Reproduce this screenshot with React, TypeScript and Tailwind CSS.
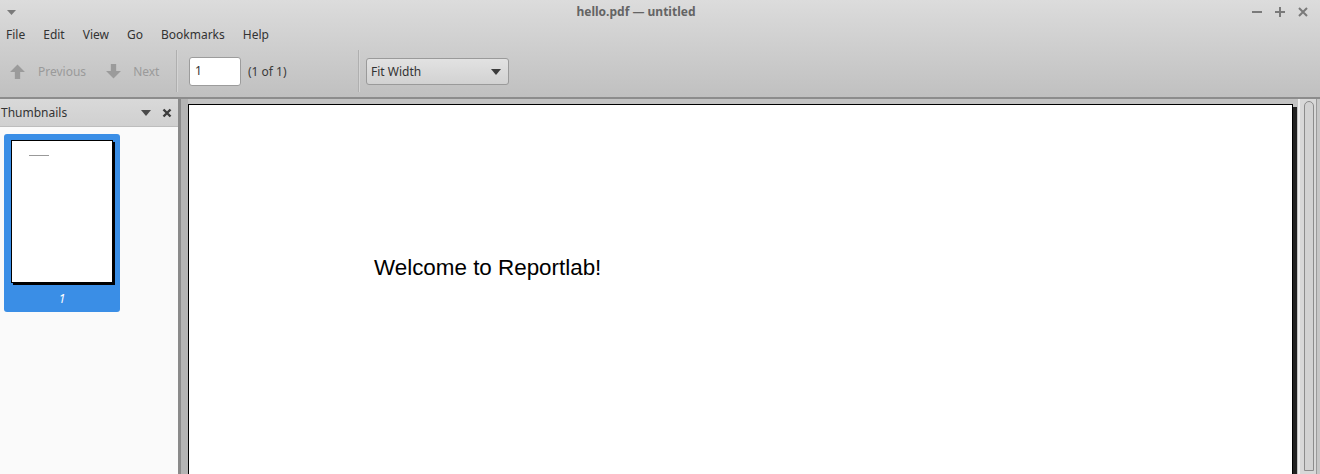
import React from "react";

function ArrowIcon({ down }: { down?: boolean }) {
  return (
    <svg width="17" height="17" viewBox="0 0 16 16" className={down ? "rotate-180" : ""}>
      <path d="M8 1.5 L15 8.5 L10.5 8.5 L10.5 15 L5.5 15 L5.5 8.5 L1 8.5 Z" fill="#9b9b9b" />
    </svg>
  );
}

function Caret({ color = "#4a4a4a" }: { color?: string }) {
  return (
    <svg width="10" height="6" viewBox="0 0 10 6">
      <path d="M0 0 L10 0 L5 6 Z" fill={color} />
    </svg>
  );
}

const menus = ["File", "Edit", "View", "Go", "Bookmarks", "Help"];

export default function App() {
  return (
    <div className="w-[1320px] h-[474px] overflow-hidden flex flex-col bg-[#c4c4c4] text-[12px] text-[#3a3a3a] font-['Noto_Sans',sans-serif]">
      {/* header: title, menu, toolbar */}
      <div className="h-[97px] flex flex-col bg-gradient-to-b from-[#dcdcdc] to-[#c0c0c0] shrink-0">
        <div className="h-[23px] flex items-center relative">
          <div className="pl-[7px] pt-[1px]">
            <svg width="9" height="5" viewBox="0 0 9 5">
              <path d="M0 0 L9 0 L4.5 5 Z" fill="#7a7a7a" />
            </svg>
          </div>
          <div className="flex-1 flex justify-center pl-[4px] font-bold text-[12px] text-[#646464]">
            hello.pdf — untitled
          </div>
          <div className="flex items-center gap-[13px] pr-[12px] text-[#777]">
            <svg width="10" height="10" viewBox="0 0 10 10">
              <path d="M0 5 H10" stroke="#7a7a7a" strokeWidth="2" />
            </svg>
            <svg width="10" height="10" viewBox="0 0 10 10">
              <path d="M0 5 H10 M5 0 V10" stroke="#7a7a7a" strokeWidth="2" />
            </svg>
            <svg width="10" height="10" viewBox="0 0 10 10">
              <path d="M1 1 L9 9 M9 1 L1 9" stroke="#7a7a7a" strokeWidth="2" />
            </svg>
          </div>
        </div>
        <div className="h-[22px] flex items-center pl-[6px] pt-[2px] gap-[18px] text-[#333]">
          {menus.map((m) => (
            <span key={m}>{m}</span>
          ))}
        </div>
        <div className="flex-1 flex items-center">
          <div className="flex items-center pl-[9px] w-[176px] h-full pt-[1px] text-[#9a9a9a]">
            <ArrowIcon />
            <span className="ml-[12px]">Previous</span>
            <span className="ml-[19px]"><ArrowIcon down /></span>
            <span className="ml-[11px]">Next</span>
          </div>
          <div className="w-[2px] h-[42px] border-l border-[#afafaf] border-r border-r-[#d4d4d4]" />
          <div className="flex items-center w-[180px] pl-[11px]">
            <div className="w-[52px] h-[29px] bg-white border border-[#9c9c9c] rounded-[3px] flex items-center pl-[5px] text-[#333]">
              1
            </div>
            <span className="ml-[7px] pt-[1px] text-[#3a3a3a]">(1 of 1)</span>
          </div>
          <div className="w-[2px] h-[42px] border-l border-[#afafaf] border-r border-r-[#d4d4d4]" />
          <div className="pl-[6px]">
            <div className="w-[143px] h-[27px] border border-[#9a9a9a] rounded-[3px] bg-gradient-to-b from-[#e2e2e2] to-[#d2d2d2] flex items-center justify-between pl-[4px] pr-[7px] pt-[1px] text-[12px] text-[#333]">
              <span>Fit Width</span>
              <Caret color="#3c3c3c" />
            </div>
          </div>
        </div>
      </div>
      <div className="h-[2px] bg-[#8c8c8c] shrink-0" />

      {/* body */}
      <div className="flex-1 flex min-h-0">
        {/* sidebar */}
        <div className="w-[178px] flex flex-col bg-[#fafafa] shrink-0">
          <div className="h-[28px] flex items-center bg-gradient-to-b from-[#d9d9d9] to-[#d0d0d0] border-b border-[#bdbdbd] text-[#333]">
            <span className="pl-[1px] flex-1">Thumbnails</span>
            <span className="mr-[11px] mt-[1px]"><Caret /></span>
            <svg width="10" height="10" viewBox="0 0 10 10" className="mr-[6px]">
              <path d="M1.5 1.5 L8.5 8.5 M8.5 1.5 L1.5 8.5" stroke="#3c3c3c" strokeWidth="2.4" />
            </svg>
          </div>
          <div className="pt-[7px] pl-[4px]">
            <div className="w-[116px] h-[178px] bg-[#3a8ee6] rounded-[3px] flex flex-col items-center pt-[6px]">
              <div className="w-[102px] h-[143px] bg-white border border-black shadow-[2px_2px_0_#000] pl-[17px] pt-[14px]">
                <div className="w-[20px] h-[1px] bg-[#999]" />
              </div>
              <span className="mt-[7px] text-[12px] italic text-white">1</span>
            </div>
          </div>
        </div>

        {/* splitter */}
        <div className="w-[3px] bg-[#8a8a8a] shrink-0" />
        <div className="w-[7px] bg-[#b4b4b4] shrink-0" />

        {/* document viewport */}
        <div className="flex-1 bg-[#c3c3c3] pt-[5px] min-w-0">
          <div className="w-[1105px] h-[420px] bg-white border border-black shadow-[4px_3px_0_#222] pl-[185px] pt-[152px]">
            <p className="font-['Liberation_Sans',Arial,sans-serif] text-[22.4px] leading-[22px] text-black">
              Welcome to Reportlab!
            </p>
          </div>
        </div>

        {/* scrollbar */}
        <div className="w-[18px] bg-[#d8d8d8] border-l-2 border-[#ececec] shrink-0 pt-[2px] pl-[4px]">
          <div className="w-[10px] h-[370px] rounded-t-full border border-[#8c8c8c] bg-[#d2d2d2]" />
        </div>
        <div className="w-[4px] bg-[#c6c6c6] border-l border-[#9a9a9a] shrink-0" />
      </div>
    </div>
  );
}
